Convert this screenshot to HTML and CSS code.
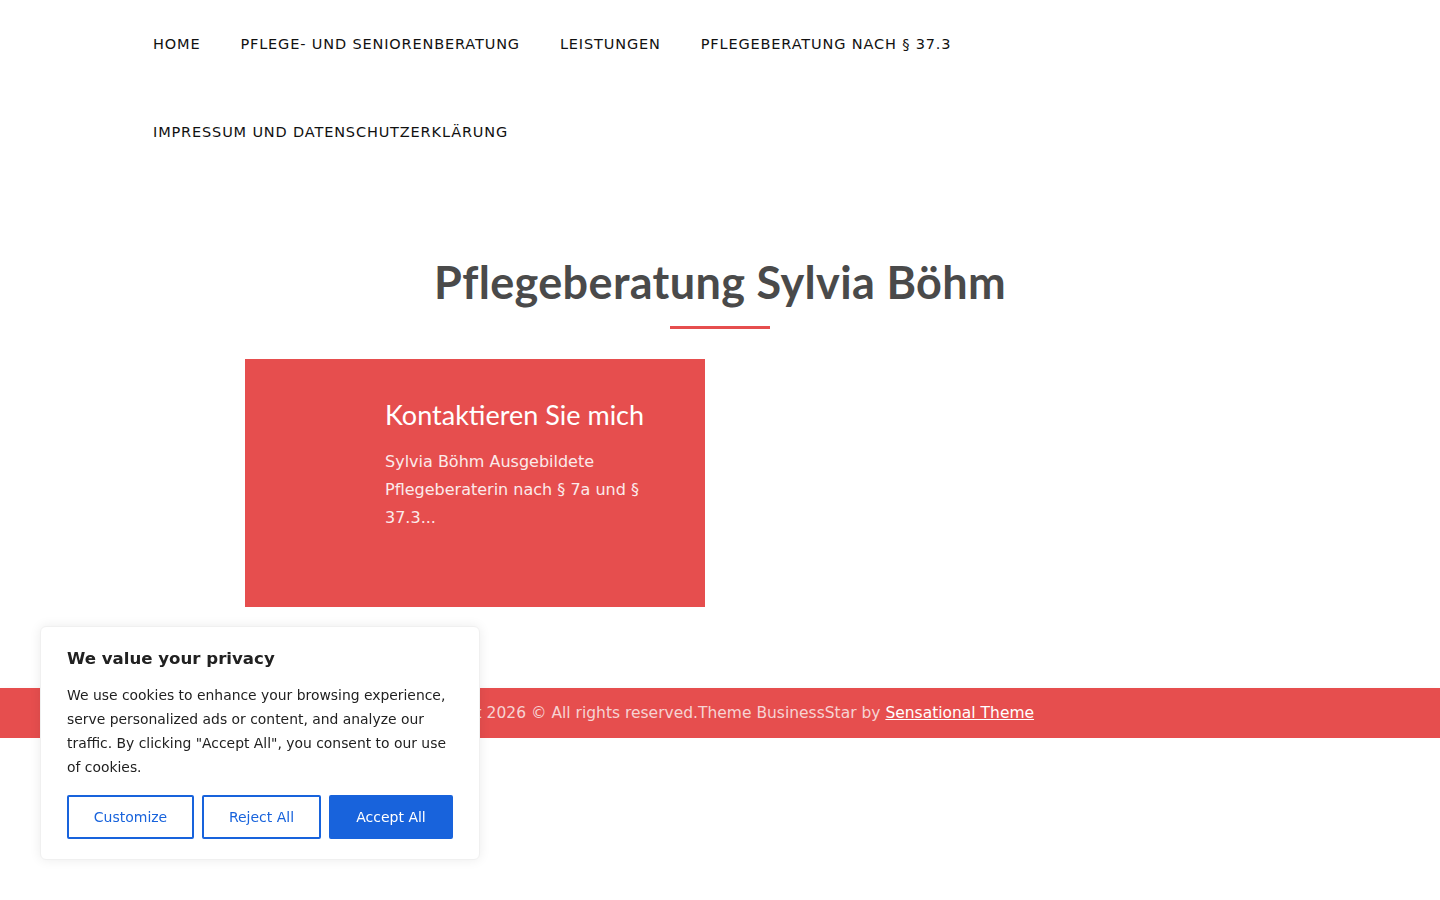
FILE: index.html
```html
<!DOCTYPE html>
<html lang="de">
<head>
<meta charset="utf-8">
<title>Pflegeberatung Sylvia Böhm</title>
<link rel="stylesheet" href="styles.css">
</head>
<body>
<header class="site-header">
  <nav class="main-nav">
    <ul class="menu">
      <li><a href="#">Home</a></li>
      <li><a href="#">Pflege- und Seniorenberatung</a></li>
      <li><a href="#">Leistungen</a></li>
      <li><a href="#">Pflegeberatung nach § 37.3</a></li>
      <li><a href="#">Impressum und Datenschutzerklärung</a></li>
    </ul>
  </nav>
</header>

<main class="home">
  <section class="intro">
    <h1 class="intro-title">Pflegeberatung Sylvia Böhm</h1>
    <span class="intro-line"></span>
  </section>

  <section class="features">
    <article class="feature-card">
      <div class="feature-icon"></div>
      <div class="feature-body">
        <h2 class="feature-title">Kontaktieren Sie mich</h2>
        <p class="feature-text">Sylvia Böhm Ausgebildete Pflegeberaterin nach § 7a und § 37.3...</p>
      </div>
    </article>
  </section>
</main>

<footer class="site-footer">
  <p class="copyright">Copyright 2026 © All rights reserved.Theme BusinessStar by <a href="#">Sensational Theme</a></p>
</footer>

<div class="cookie-box">
  <h3 class="cookie-title">We value your privacy</h3>
  <p class="cookie-text">We use cookies to enhance your browsing experience, serve personalized ads or content, and analyze our traffic. By clicking "Accept All", you consent to our use of cookies.</p>
  <div class="cookie-actions">
    <button class="btn btn-outline btn-customize">Customize</button>
    <button class="btn btn-outline btn-reject">Reject All</button>
    <button class="btn btn-solid btn-accept">Accept All</button>
  </div>
</div>
</body>
</html>
```

FILE: styles.css
```css
* { box-sizing: border-box; }

html, body {
  margin: 0;
  padding: 0;
  background: #fff;
}

body {
  font-family: "DejaVu Sans", "Noto Sans", sans-serif;
  color: #222;
}

/* ---------- header / navigation ---------- */
.site-header {
  height: 176px;
}

.main-nav {
  width: 880px;
  margin-left: 133px;
}

.menu {
  list-style: none;
  margin: 0;
  padding: 0;
  display: flex;
  flex-wrap: wrap;
}

.menu a {
  display: block;
  padding: 0 20px;
  line-height: 88px;
  font-size: 14.5px;
  font-weight: 400;
  text-transform: uppercase;
  color: #111;
  text-decoration: none;
  letter-spacing: 0.85px;
}

/* ---------- intro heading ---------- */
.intro {
  display: flex;
  flex-direction: column;
  align-items: center;
  padding-top: 78px;
}

.intro-title {
  margin: 0;
  font-family: "Lato", "Open Sans", sans-serif;
  font-weight: 700;
  font-size: 45px;
  line-height: 56px;
  color: #4a4a4a;
  letter-spacing: 0.35px;
}

.intro-line {
  display: block;
  width: 100px;
  height: 3px;
  margin-top: 16px;
  background: #e64e4e;
}

/* ---------- feature cards ---------- */
.features {
  width: 950px;
  margin: 30px auto 0;
  display: grid;
  grid-template-columns: 460px 460px;
  column-gap: 30px;
}

.feature-card {
  background: #e64e4e;
  height: 248px;
  display: flex;
  padding: 38px 40px 0 0;
}

.feature-icon {
  width: 140px;
  flex: none;
}

.feature-title {
  margin: 0;
  font-family: "Lato", "Open Sans", sans-serif;
  font-weight: 400;
  font-size: 27px;
  line-height: 36px;
  color: #fff;
}

.feature-text {
  margin: 15px 0 0;
  font-size: 16px;
  line-height: 28px;
  color: #fbeaea;
}

/* ---------- footer ---------- */
.site-footer {
  margin-top: 81px;
  height: 50px;
  background: #e64e4e;
  box-shadow: 0 5px 8px rgba(0, 0, 0, 0.14);
  display: flex;
  align-items: center;
  justify-content: center;
}

.copyright {
  margin: 0;
  font-size: 15.5px;
  color: #f6d3d3;
}

.copyright a {
  color: #fff;
  text-decoration: underline;
}

/* ---------- cookie consent ---------- */
.cookie-box {
  position: fixed;
  left: 40px;
  bottom: 40px;
  width: 440px;
  padding: 20px 26px 20px;
  background: #fff;
  border: 1px solid #f0f0f0;
  border-radius: 6px;
  box-shadow: 0 0 12px rgba(0, 0, 0, 0.08);
}

.cookie-title {
  margin: 0;
  font-size: 16.6px;
  line-height: 24px;
  font-weight: 700;
  color: #212121;
}

.cookie-text {
  margin: 12px 0 0;
  font-size: 13.9px;
  line-height: 24px;
  color: #212121;
}

.cookie-actions {
  display: flex;
  gap: 8px;
  margin-top: 16px;
}

.btn {
  height: 44px;
  font-family: inherit;
  font-size: 14px;
  border: 2px solid #1863dc;
  border-radius: 2px;
  cursor: pointer;
}

.btn-outline {
  background: #fff;
  color: #1863dc;
}

.btn-solid {
  background: #1863dc;
  color: #fff;
}

.btn-customize { width: 127px; }
.btn-reject { width: 119px; }
.btn-accept { width: 124px; }
```
